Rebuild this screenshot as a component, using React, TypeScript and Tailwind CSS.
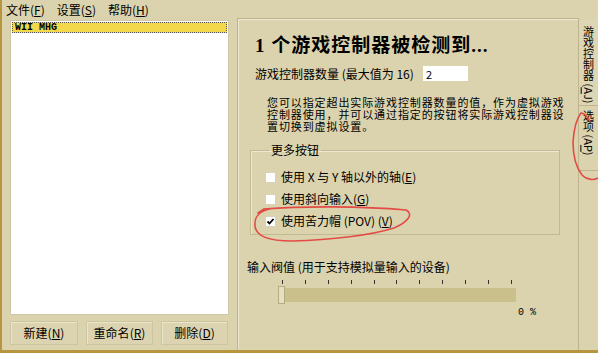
import React from "react";

const U = ({ c }: { c: string }) => <span className="underline underline-offset-1">{c}</span>;

function CheckRow({ label, k, tail, checked }: { label: string; k: string; tail?: string; checked?: boolean }) {
  return (
    <div className="flex items-center h-[22px]">
      <div className="w-[11px] h-[11px] bg-white border border-[#d8d2bc] flex items-center justify-center">
        {checked && (
          <svg width="9" height="9" viewBox="0 0 9 9">
            <path d="M1.5 4.5 L3.5 6.5 L7.5 2" stroke="#000" strokeWidth="1.8" fill="none" />
          </svg>
        )}
      </div>
      <span className="ml-[5px] whitespace-pre">
        {label}(<U c={k} />){tail}
      </span>
    </div>
  );
}

export default function App() {
  const ticks = Array.from({ length: 11 });
  return (
    <div className="relative w-[598px] h-[353px] overflow-hidden bg-[#dbd3ae] text-black text-[12px] leading-[14px] font-['Noto_Sans_CJK_SC',sans-serif] border-l-2 border-b-[3px] border-[#b89640] flex flex-col">
      {/* menu bar */}
      <div className="h-[18px] flex items-center gap-[12px] pl-[4px] pt-[1px]">
        <span>文件(<U c="F" />)</span>
        <span>设置(<U c="S" />)</span>
        <span>帮助(<U c="H" />)</span>
      </div>
      <div className="flex-1 flex min-h-0">
        {/* left column */}
        <div className="w-[235px] flex flex-col pl-[8px] pt-[2px]">
          <div className="w-[219px] h-[295px] bg-white border border-[#cfc7a6] p-px">
            <div className="h-[11px] bg-[#f4d84c] border border-dotted border-[#555] flex items-center pl-[2px] font-['Liberation_Mono',monospace] text-[10px] font-bold leading-none">
              WII MHG
            </div>
          </div>
          <div className="flex gap-[8px] mt-[6px]">
            {[
              ["新建", "N", 68],
              ["重命名", "R", 67],
              ["删除", "D", 67],
            ].map(([t, k, w]) => (
              <div
                key={t as string}
                className="h-[24px] border border-[#cdc5a2] bg-[#dcd4b0] shadow-[inset_1px_1px_0_#ebe5ca] flex items-center justify-center"
                style={{ width: w as number }}
              >
                {t}(<U c={k as string} />)
              </div>
            ))}
          </div>
        </div>
        {/* tab panel */}
        <div className="flex-1 border-l border-t border-r border-[#bdb48d] shadow-[inset_1px_1px_0_#ede7cf] flex flex-col pl-[9px] pt-[16px]">
          <div className="ml-[8px] h-[22px] flex items-center font-bold text-[19px] tracking-[1px] font-['Liberation_Serif','Noto_Sans_CJK_SC',serif]">
            1 个游戏控制器被检测到...
          </div>
          <div className="ml-[8px] mt-[9px] flex items-center h-[15px]">
            <span className="w-[168px] whitespace-pre">游戏控制器数量 (最大值为 16)</span>
            <div className="w-[45px] h-[15px] bg-white flex items-center pl-[3px] text-[11px]">2</div>
          </div>
          <p className="ml-[20px] mt-[15px] text-[11px] leading-[12px] tracking-[0.9px] whitespace-nowrap">
            您可以指定超出实际游戏控制器数量的值，作为虚拟游戏
            <br />
            控制器使用，并可以通过指定的按钮将实际游戏控制器设
            <br />
            置切换到虚拟设置。
          </p>
          <fieldset className="ml-[3px] mt-[11px] w-[310px] h-[92px] border border-[#c3b990] shadow-[inset_1px_1px_0_#eee8d0] pl-[14px] pt-[9px]">
            <legend className="ml-[4px] px-[2px] leading-[14px]">更多按钮</legend>
            <CheckRow label="使用 X 与 Y 轴以外的轴" k="E" />
            <CheckRow label="使用斜向输入" k="G" />
            <CheckRow label="使用苦力帽 (POV) " k="V" checked />
          </fieldset>
          <div className="mt-[25px] whitespace-pre">输入阀值 (用于支持模拟量输入的设备)</div>
          <div className="ml-[31px] mt-[6px] w-[238px] flex justify-between px-[4px]">
            {ticks.map((_, i) => (
              <div key={i} className="w-px h-[4px] bg-[#333]" />
            ))}
          </div>
          <div className="relative ml-[31px] mt-[4px] w-[238px] h-[14px] bg-[#c9c08b]">
            <div className="absolute left-0 top-[-2px] w-[7px] h-[18px] bg-[#e6dfc0] border border-[#b5ab80]" />
          </div>
          <div className="ml-[271px] mt-[4px] text-[10px] font-['Liberation_Mono',monospace] whitespace-pre">0 %</div>
        </div>
        {/* vertical tabs */}
        <div className="w-[19px] flex flex-col pt-[2px]">
          <div className="h-[86px] border-b border-[#bdb48d] flex items-start justify-center pt-[6px] bg-[#ddd6b4]">
            <span className="[writing-mode:vertical-rl] text-[11px] leading-[12px] whitespace-pre">游戏控制器 (<U c="A" />J)</span>
          </div>
          <div className="h-[65px] border-b border-[#bdb48d] flex items-start justify-center pt-[4px]">
            <span className="[writing-mode:vertical-rl] text-[11px] leading-[12px] whitespace-pre">选项 (A<U c="P" />)</span>
          </div>
        </div>
      </div>
      {/* red annotations */}
      <svg className="absolute left-0 top-0 pointer-events-none" width="598" height="353" viewBox="0 0 598 353">
        <path
          d="M262 209 C300 206 360 206 404 210 C412 214 406 222 392 228 C370 235 330 240 290 241 C268 241 254 236 253 226 C252 217 258 211 268 209 M262 209 L256 213"
          stroke="#e34b45"
          strokeWidth="1.6"
          fill="none"
          strokeLinecap="round"
        />
        <path
          d="M588 121 C585 116 582 113 579 113 C575 118 572 128 571 142 C571 156 573 166 580 175 C585 180 592 181 598 177"
          stroke="#e34b45"
          strokeWidth="1.6"
          fill="none"
          strokeLinecap="round"
        />
      </svg>
    </div>
  );
}
